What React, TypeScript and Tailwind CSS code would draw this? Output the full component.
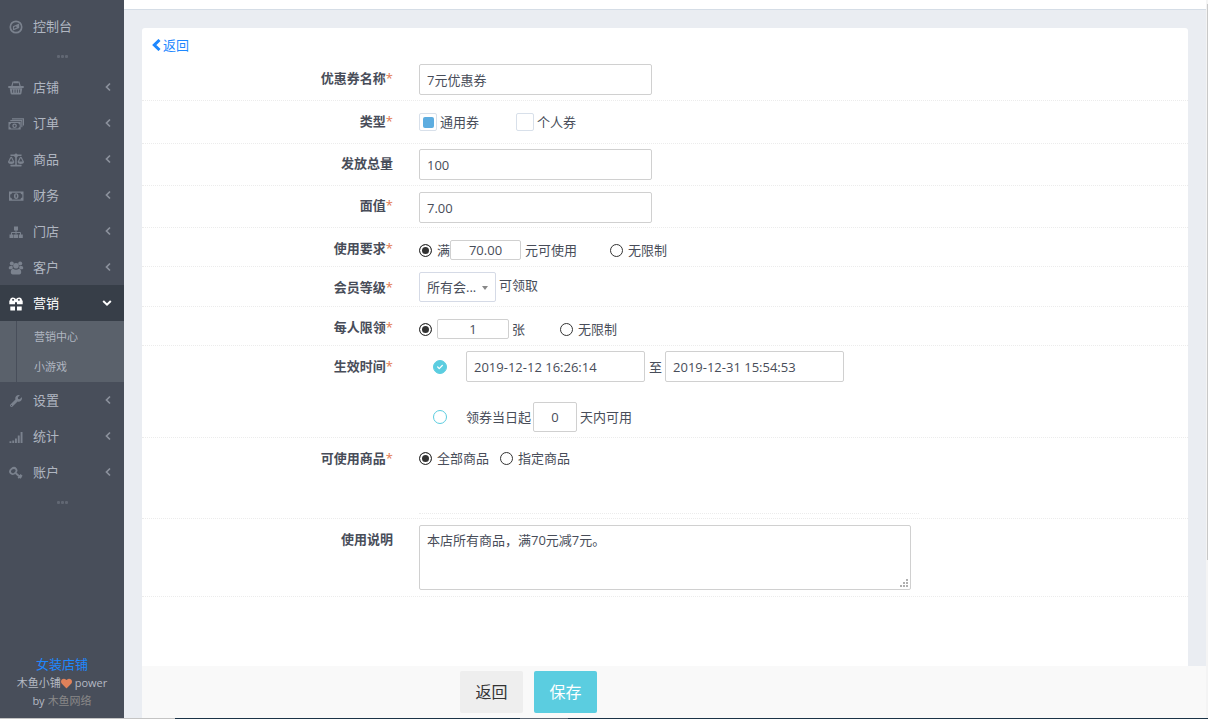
import React from 'react';
import { FaBalanceScale, FaWrench, FaHeart, FaCheck } from 'react-icons/fa';

const ic = 'h-4 w-4';

function Svg({ children }: { children: React.ReactNode }) {
  return (
    <svg viewBox="0 0 16 16" className="h-4 w-4" fill="currentColor" aria-hidden="true">
      {children}
    </svg>
  );
}

const Compass = () => (
  <Svg>
    <circle cx="8" cy="8" r="5.700" fill="none" stroke="currentColor" strokeWidth="1.700" />
    <path fillRule="evenodd" d="M11.200 4.600V9L4.900 11.500V7.300zM8 7.200l-1.900.9v1.600L8.900 8.500z" />
  </Svg>
);
const Basket = () => (
  <Svg>
    <path d="M3.800 6.500L5 2.200h6L12.200 6.500" fill="none" stroke="currentColor" strokeWidth="1.200" />
    <path d="M6 1.400h4v1.800H6zM1 6h14a.9.9 0 0 1 0 1.900H1A.9.9 0 0 1 1 6z" />
    <path fillRule="evenodd" d="M1.700 8.300h12.600l-.9 5.300a1 1 0 0 1-1 .8H3.600a1 1 0 0 1-1-.8zM4.200 9.500v3.300h.9V9.500zM6.600 9.500v3.300h.9V9.500zM8.900 9.500v3.300h.9V9.500zM11.200 9.500v3.300h.9V9.500z" />
  </Svg>
);
const Bill = () => (
  <Svg>
    <path fillRule="evenodd" d="M1 3.500h14.500v9.300H1zM4 4.800A1.900 1.900 0 0 1 2.200 6.600v3A1.900 1.900 0 0 1 4 11.500h8.500a1.900 1.900 0 0 1 1.800-1.900v-3A1.900 1.900 0 0 1 12.500 4.800z" />
    <path fillRule="evenodd" d="M8.200 5.200a2.300 2.900 0 1 0 0 5.800a2.300 2.900 0 1 0 0-5.800zM7.600 6.600h1.300v3h-1.300z" />
  </Svg>
);
const Bills = () => (
  <Svg>
    <path d="M4 2.200H16V9.500H14.900V3.500H4zM2.300 4.100H14.400V11.300H13.300V5.300H2.300z" />
    <path fillRule="evenodd" d="M.5 6h12.200v7.600H.5zM3 7.100a1.600 1.600 0 0 1-1.400 1.400v2.600A1.600 1.600 0 0 1 3 12.500h7.300a1.600 1.600 0 0 1 1.400-1.400V8.500a1.600 1.600 0 0 1-1.400-1.400z" />
    <path fillRule="evenodd" d="M6.600 7.500a2.300 2.300 0 1 0 0 4.600a2.300 2.300 0 1 0 0-4.600zM6.600 8.700a1 1.100 0 1 1 0 2.200a1 1.100 0 1 1 0-2.200z" />
  </Svg>
);
const Tree = () => (
  <Svg>
    <path d="M6 2.500h4v4H6zM1.500 10.500h4v3.500h-4zM6 10.500h4v3.500H6zM10.800 10.500h4v3.500h-4z" />
    <path d="M8 6v4.500M3.500 11V8.500h9V11" fill="none" stroke="currentColor" />
  </Svg>
);
const People = () => (
  <Svg>
    <circle cx="3.800" cy="3.600" r="2" />
    <circle cx="12.200" cy="3.600" r="2" />
    <circle cx="8" cy="5.800" r="2.800" />
    <path d="M2.500 6C1 6 .8 7 .8 8.200C.8 9 1.400 9.300 2.200 9.300H3.500C4.500 8.500 5 8.500 5 8C4.500 7.200 4.500 6.500 4.600 6zM13.500 6C15 6 15.200 7 15.200 8.200C15.200 9 14.600 9.300 13.800 9.300H12.500C11.500 8.500 11 8.500 11 8C11.500 7.200 11.500 6.500 11.400 6z" />
    <path d="M5 8.800C3.300 9 2.800 10.500 2.800 12.300C2.800 13.600 3.500 14.400 4.700 14.400h6.600C12.500 14.400 13.200 13.600 13.200 12.300C13.200 10.500 12.700 9 11 8.800C9 10 7 10 5 8.800z" />
  </Svg>
);
const Gift = () => (
  <Svg>
    <path fillRule="evenodd" d="M2 4.500C2 2.600 3.200 1.600 4.800 1.600C6.300 1.600 7.300 2.400 8 3.400C8.700 2.400 9.700 1.600 11.200 1.600C12.800 1.600 14 2.600 14 4.500H14.700v3.700H9V6.200H7V8.200H1.300V4.500zM4 3.800a1 .8 0 0 0 2.200 0a1 .8 0 0 0-2.200 0zM9.800 3.800a1 .8 0 0 0 2.200 0a1 .8 0 0 0-2.200 0z" />
    <path d="M2.300 10.500H7v4H2.800a.5.500 0 0 1-.5-.5zM9 10.500h4.700V14a.5.500 0 0 1-.5.500H9z" />
  </Svg>
);
const Signal = () => (
  <Svg>
    <path d="M1.500 12.300h1.900V14H1.500zM4.300 11.400h1.900V14H4.300zM7 9.600h1.900V14H7zM9.800 6.600h1.900V14H9.800zM12.600 3h1.900v11h-1.900z" />
  </Svg>
);
const Key = () => (
  <svg viewBox="0 0 16 16" className="h-4 w-4" fill="none" stroke="currentColor" strokeWidth="1.800" aria-hidden="true">
    <ellipse cx="5.300" cy="6" rx="3.400" ry="2.700" transform="rotate(-40 5.300 6)" />
    <path d="M7.500 8l5.700 5M10.200 13.200l1.900-1.900M12 9.800l2 1.700" />
  </svg>
);
const ChevronLeft = () => (
  <svg viewBox="0 0 8 12" className="h-3 w-2" fill="none" stroke="currentColor" strokeWidth="1.700" aria-hidden="true">
    <path d="M6 2.500L2.500 6L6 9.500" />
  </svg>
);
const ChevronDown = () => (
  <svg viewBox="0 0 10 10" className="h-[10px] w-[10px]" fill="none" stroke="currentColor" strokeWidth="2" aria-hidden="true">
    <path d="M1.200 3L5 6.700L8.800 3" />
  </svg>
);
const Dots = () => (
  <div className="flex h-[25px] items-center justify-center gap-px">
    <i className="h-[3px] w-[3px] rounded-[1px] bg-[#616773]" />
    <i className="h-[3px] w-[3px] rounded-[1px] bg-[#616773]" />
    <i className="h-[3px] w-[3px] rounded-[1px] bg-[#616773]" />
  </div>
);

function NavItem({ icon, label, active = false, plain = false }: { icon: React.ReactNode; label: string; active?: boolean; plain?: boolean }) {
  return (
    <a href="#" className={`flex h-9 items-center pl-2 pr-3 ${active ? 'bg-[#373e48] text-white' : 'text-[#b0b6c1]'}`}>
      <span className={active ? 'pt-[2px]' : 'pt-[2px] text-[#7b828e]'}>{icon}</span>
      <span className="flex-1 pl-[9px]">{label}</span>
      {!plain && (active ? <ChevronDown /> : <span className="text-[#8b919c]"><ChevronLeft /></span>)}
    </a>
  );
}

function Row({ label, required = true, className, htmlFor, children }: { label: string; required?: boolean; className: string; htmlFor?: string; children: React.ReactNode }) {
  return (
    <div className={`flex border-b border-dotted border-[#ececec] ${className}`}>
      <label htmlFor={htmlFor} className="w-[251px] shrink-0 text-right font-bold">
        {label}
        {required && <span className="font-normal text-[#e2784f]">*</span>}
      </label>
      <div className="min-w-0 flex-1 pl-[26px]">{children}</div>
    </div>
  );
}

const box = 'rounded-[2px] border border-[#d0d0d0] bg-white outline-none';
const field = `${box} block h-[31px] w-[233px] px-[7px]`;
const radio = 'm-0 h-[13px] w-[13px] shrink-0 appearance-none rounded-full border border-[#333] bg-white checked:bg-[#333] checked:shadow-[inset_0_0_0_2px_white]';
const check = 'm-0 grid h-[18px] w-[18px] shrink-0 appearance-none place-items-center rounded-[2px] border border-[#d8e0ea] bg-white before:h-[11px] before:w-[11px] before:rounded-[2px] checked:before:bg-[#5dade0]';

export default function App() {
  return (
    <div className="flex h-screen flex-col overflow-hidden bg-[#eaedf2] font-['Open_Sans','Noto_Sans_CJK_SC',sans-serif] text-[13px] leading-5 text-[#484d59]">
      <div className="flex min-h-0 flex-1">
        <aside className="flex w-[124px] shrink-0 flex-col bg-[#484e5a]">
          <nav className="pt-2">
            <NavItem plain icon={<Compass />} label="控制台" />
            <Dots />
            <NavItem icon={<Basket />} label="店铺" />
            <NavItem icon={<Bills />} label="订单" />
            <NavItem icon={<FaBalanceScale className={ic} />} label="商品" />
            <NavItem icon={<Bill />} label="财务" />
            <NavItem icon={<Tree />} label="门店" />
            <NavItem icon={<People />} label="客户" />
            <NavItem active icon={<Gift />} label="营销" />
            <div className="bg-[#5a616b] pl-4 text-[11px] text-[#b0b6c1]">
              <div className="flex h-[61px] flex-col border-l border-[#484e5a] pl-[17px]">
                <a href="#" className="flex h-8 items-center">营销中心</a>
                <a href="#" className="flex h-7 items-center">小游戏</a>
              </div>
            </div>
            <NavItem icon={<FaWrench className="mx-[2px] h-3 w-3" />} label="设置" />
            <NavItem icon={<Signal />} label="统计" />
            <NavItem icon={<Key />} label="账户" />
            <Dots />
          </nav>
          <div className="mt-auto px-3 pb-2 text-center text-[11px] leading-[18px] text-[#b4b9c3]">
            <a href="#" className="block text-[13px] leading-5 text-[#1e88ff]">女装店铺</a>
            <div className="flex items-center justify-center">
              <span>木鱼小铺</span>
              <FaHeart className="h-[11px] w-[11px] text-[#e0815a]" />
              <span className="pl-[3px]">power</span>
            </div>
            <div className="flex items-center justify-center gap-[3px]">
              <span>by</span>
              <a href="#" className="text-[#888]">木鱼网络</a>
            </div>
          </div>
        </aside>

        <main className="flex min-w-0 flex-1 flex-col">
          <header className="h-[10px] shrink-0 border-b border-[#d5dde6] bg-white" />
          <form className="ml-[18px] flex min-h-0 flex-1 flex-col pt-[18px]" onSubmit={(e) => e.preventDefault()}>
            <section className="mr-[18px] min-h-0 flex-1 overflow-hidden rounded-t-[3px] bg-white">
              <div className="h-8 px-[10px] pt-[7px]">
                <a href="#" className="inline-flex items-center gap-[2px] text-[#1e88ff]">
                  <svg viewBox="0 0 9 12" className="h-3 w-[9px]" fill="none" stroke="currentColor" strokeWidth="3" aria-hidden="true">
                    <path d="M7.500 1L2.300 6L7.500 11" />
                  </svg>
                  返回
                </a>
              </div>
              <Row label="优惠券名称" htmlFor="name" className="h-[41px] pt-1 *:first:pt-1">
                <input id="name" className={field} defaultValue="7元优惠券" />
              </Row>
              <Row label="类型" className="h-[43px] pt-[10px]">
                <div className="flex pt-px">
                  <label className="flex w-[97px] items-center gap-[3px]"><input type="checkbox" defaultChecked className={check} />通用券</label>
                  <label className="flex items-center gap-[3px]"><input type="checkbox" className={check} />个人券</label>
                </div>
              </Row>
              <Row label="发放总量" required={false} htmlFor="total" className="h-[42px] pt-[5px] *:first:pt-1">
                <input id="total" className={field} defaultValue="100" />
              </Row>
              <Row label="面值" htmlFor="value" className="h-[42px] pt-[6px] *:first:pt-[3px]">
                <input id="value" className={field} defaultValue="7.00" />
              </Row>
              <Row label="使用要求" className="h-[39px] pt-[10px]">
                <div className="flex items-center pt-[2px]">
                  <label className="flex items-center gap-[5px]"><input type="radio" name="need" defaultChecked className={radio} />满</label>
                  <input aria-label="满额" className={`${box} h-5 w-[71px] text-center`} defaultValue="70.00" />
                  <span className="w-[89px] pl-1">元可使用</span>
                  <label className="flex items-center gap-[5px]"><input type="radio" name="need" className={radio} />无限制</label>
                </div>
              </Row>
              <Row label="会员等级" htmlFor="level" className="h-10 pt-[5px] *:first:pt-[5px]">
                <div className="flex">
                  <div className="relative">
                    <select id="level" className="block h-[30px] w-[77px] appearance-none overflow-hidden rounded-[2px] border border-[#d5dae6] bg-white pl-[7px] pr-3 text-[13px] outline-none">
                      <option>所有会...</option>
                    </select>
                    <svg viewBox="0 0 6 4" className="pointer-events-none absolute right-2 top-[14px] h-1 w-[6px] fill-[#888]" aria-hidden="true"><path d="M0 0h6L3 4z" /></svg>
                  </div>
                  <span className="pl-[3px] pt-[3px]">可领取</span>
                </div>
              </Row>
              <Row label="每人限领" className="h-[39px] pt-[10px]">
                <div className="flex items-center pt-[2px]">
                  <input type="radio" name="limit" aria-label="限领" defaultChecked className={radio} />
                  <input aria-label="张数" className={`${box} ml-[5px] h-5 w-[72px] text-center`} defaultValue="1" />
                  <span className="w-[51px] pl-[3px]">张</span>
                  <label className="flex items-center gap-[5px]"><input type="radio" name="limit" className={radio} />无限制</label>
                </div>
              </Row>
              <Row label="生效时间" className="h-[92px] pt-[5px] *:first:pt-[5px]">
                <div className="flex items-center pl-[14px]">
                  <span className="relative flex">
                    <input type="radio" name="time" aria-label="固定时间" defaultChecked className="m-0 h-[14px] w-[14px] appearance-none rounded-full border border-[#5bcde0] checked:bg-[#5bcde0]" />
                    <FaCheck className="pointer-events-none absolute left-1 top-1 h-[6px] w-[6px] text-white" />
                  </span>
                  <input aria-label="开始时间" className={`${box} ml-[19px] h-[31px] w-[179px] px-[7px]`} defaultValue="2019-12-12 16:26:14" />
                  <span className="pl-1 pr-[3px]">至</span>
                  <input aria-label="结束时间" className={`${box} h-[31px] w-[179px] px-[7px]`} defaultValue="2019-12-31 15:54:53" />
                </div>
                <div className="flex items-center pl-[14px] pt-5">
                  <label className="flex items-center gap-[19px]">
                    <input type="radio" name="time" className="m-0 h-[14px] w-[14px] appearance-none rounded-full border border-[#5bcde0] checked:bg-[#5bcde0]" />
                    领券当日起
                  </label>
                  <input aria-label="天数" className={`${box} ml-[2px] mr-[3px] h-[30px] w-11 text-center`} defaultValue="0" />
                  天内可用
                </div>
              </Row>
              <Row label="可使用商品" className="h-[81px] pt-[10px]">
                <div className="flex gap-[11px]">
                  <label className="flex items-center gap-[5px]"><input type="radio" name="goods" defaultChecked className={radio} />全部商品</label>
                  <label className="flex items-center gap-[5px]"><input type="radio" name="goods" className={radio} />指定商品</label>
                </div>
                <div className="mr-[269px] mt-[45px] border-b border-dotted border-[#ececec]" />
              </Row>
              <Row label="使用说明" required={false} htmlFor="note" className="h-[78px] pt-[6px] *:first:pt-1">
                <div className="relative w-[492px] max-w-full">
                  <textarea id="note" className={`${box} block h-[65px] w-full resize-none px-[7px] pt-1`} defaultValue="本店所有商品，满70元减7元。" />
                  <svg viewBox="0 0 8 8" className="pointer-events-none absolute bottom-[3px] right-[3px] h-2 w-2 fill-[#b0b0b0]" aria-hidden="true">
                    <path d="M6 0h2v2H6zM3 3h2v2H3zM6 3h2v2H6zM0 6h2v2H0zM3 6h2v2H3zM6 6h2v2H6z" />
                  </svg>
                </div>
              </Row>
            </section>
            <footer className="flex h-[52px] shrink-0 gap-[11px] bg-[#f9f9f9] pl-[318px] pt-[5px] text-base">
              <button type="button" className="h-[42px] w-[63px] rounded-[2px] bg-[#eee] text-[#333]">返回</button>
              <button type="submit" className="h-[42px] w-[63px] rounded-[2px] bg-[#5bcde0] text-white">保存</button>
            </footer>
          </form>
        </main>
        <div className="w-[2px] shrink-0 bg-[#f4f4f4] pl-px pt-1"><div className="h-[556px] bg-[#c8c8c8]" /></div>
      </div>
      <div className="flex h-px shrink-0 bg-[#1b3347]">
        <div className="w-[175px] bg-[#c4c4c4]" />
        <div className="ml-[345px] w-12 bg-[#5b6673]" />
      </div>
    </div>
  );
}
